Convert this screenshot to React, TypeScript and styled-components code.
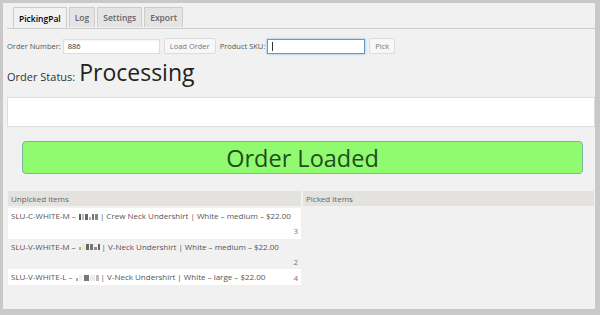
import React from 'react';
import styled, { createGlobalStyle } from 'styled-components';

const GlobalStyle = createGlobalStyle`
  html, body {
    margin: 0;
    padding: 0;
    background: #c9c9c9;
    font-family: "Open Sans", "Liberation Sans", sans-serif;
  }
`;

const Frame = styled.div`
  margin: 3px 5px 6px 3px;
  height: 306px;
  background: #f1f1f1;
  box-sizing: border-box;
  padding: 4px 0 0 4px;
  overflow: hidden;
`;

const TabBar = styled.div`
  display: flex;
  gap: 2px;
  padding-left: 6px;
  border-bottom: 1px solid #cccccc;
  height: 21px;
`;

const Tab = styled.div<{ $active?: boolean }>`
  display: flex;
  align-items: center;
  padding: 0 5px;
  font-size: 8.5px;
  font-weight: 600;
  color: ${p => (p.$active ? '#000' : '#666')};
  background: ${p => (p.$active ? '#f1f1f1' : '#e4e4e4')};
  border: 1px solid #cccccc;
  border-bottom: none;
  margin-bottom: ${p => (p.$active ? '-1px' : '0')};
  height: ${p => (p.$active ? '21px' : '20px')};
  box-sizing: border-box;
`;

const FormRow = styled.div`
  display: flex;
  align-items: center;
  margin-top: 9px;
  height: 16px;
`;

const Label = styled.span`
  font-size: 7.5px;
  color: #555;
  margin-right: 2px;
`;

const TextInput = styled.div<{ $focus?: boolean; $width: number }>`
  width: ${p => p.$width}px;
  height: 15px;
  box-sizing: border-box;
  background: #fff;
  border: 1px solid ${p => (p.$focus ? '#5b9dd9' : '#dddddd')};
  box-shadow: ${p => (p.$focus ? '0 0 2px rgba(30,140,190,.6)' : 'inset 0 1px 2px rgba(0,0,0,.05)')};
  font-size: 7.5px;
  color: #333;
  display: flex;
  align-items: center;
  padding-left: 4px;
`;

const Caret = styled.span`
  width: 1px;
  height: 9px;
  background: #333;
`;

const Button = styled.div`
  height: 16px;
  box-sizing: border-box;
  padding: 0 5px;
  margin: 0 4px;
  border: 1px solid #dcdcdc;
  background: #f7f7f7;
  border-radius: 2px;
  font-size: 7.5px;
  color: #777;
  display: flex;
  align-items: center;
`;

const StatusRow = styled.div`
  display: flex;
  align-items: baseline;
  margin-top: 2px;
  height: 32px;
`;

const StatusLabel = styled.span`
  font-size: 11px;
  color: #333;
  margin-right: 4px;
`;

const StatusValue = styled.span`
  font-size: 23px;
  color: #222;
`;

const MessageBox = styled.div`
  margin-top: 9px;
  height: 30px;
  background: #fff;
  border: 1px solid #dddddd;
  box-sizing: border-box;
`;

const Banner = styled.div`
  margin: 14px 12px 0 15px;
  height: 33px;
  box-sizing: border-box;
  background: #90fb6f;
  border: 1px solid #7fb3a0;
  border-radius: 4px;
  display: flex;
  align-items: center;
  justify-content: center;
  font-size: 23.5px;
  color: #244c1f;
`;

const Table = styled.div`
  display: grid;
  grid-template-columns: 293px 291px;
  column-gap: 2px;
  margin-top: 17px;
  margin-left: 1px;
`;

const HeadCell = styled.div`
  background: #e4e2df;
  height: 15px;
  font-size: 8px;
  color: #666;
  display: flex;
  align-items: center;
  padding-left: 3px;
`;

const Column = styled.div`
  display: flex;
  flex-direction: column;
  padding-top: 2px;
`;

const ItemRow = styled.div<{ $odd?: boolean; $stack?: boolean }>`
  background: ${p => (p.$odd ? '#ffffff' : 'transparent')};
  display: flex;
  flex-direction: ${p => (p.$stack ? 'column' : 'row')};
  justify-content: space-between;
  padding: 1px 3px 0 3px;
  font-size: 8px;
  line-height: 14.5px;
  color: #555;
  white-space: nowrap;
`;

const Qty = styled.span`
  align-self: flex-end;
  color: #777;
`;

const Redact = styled.span`
  display: inline-block;
  vertical-align: middle;
  margin: 0 1px;
  opacity: 0.8;
`;

const Block = styled.span<{ $w: number; $c: string; $h?: number }>`
  display: inline-block;
  width: ${p => p.$w}px;
  height: ${p => p.$h ?? 6}px;
  background: ${p => p.$c};
  margin-right: 1px;
`;

type Item = { sku: string; blocks: [number, string, number?][]; desc: string; qty: number; stack: boolean };

const items: Item[] = [
  {
    sku: 'SLU-C-WHITE-M –',
    blocks: [[2, '#333'], [2, '#aaa'], [3, '#444'], [2, '#999', 3], [2, '#555'], [3, '#666']],
    desc: '| Crew Neck Undershirt | White – medium – $22.00',
    qty: 3,
    stack: true,
  },
  {
    sku: 'SLU-V-WHITE-M –',
    blocks: [[2, '#999', 3], [3, '#f3e6c8'], [3, '#444'], [3, '#555'], [3, '#777', 3], [2, '#444']],
    desc: '| V-Neck Undershirt | White – medium – $22.00',
    qty: 2,
    stack: true,
  },
  {
    sku: 'SLU-V-WHITE-L –',
    blocks: [[2, '#999', 3], [4, '#f0f0f0'], [5, '#555'], [5, '#e8e8e8'], [3, '#aaa']],
    desc: '| V-Neck Undershirt | White – large – $22.00',
    qty: 4,
    stack: false,
  },
];

export default function App() {
  return (
    <>
      <GlobalStyle />
      <Frame>
        <TabBar>
          <Tab $active>PickingPal</Tab>
          <Tab>Log</Tab>
          <Tab>Settings</Tab>
          <Tab>Export</Tab>
        </TabBar>
        <FormRow>
          <Label>Order Number:</Label>
          <TextInput $width={97}>886</TextInput>
          <Button>Load Order</Button>
          <Label>Product SKU:</Label>
          <TextInput $width={98} $focus>
            <Caret />
          </TextInput>
          <Button>Pick</Button>
        </FormRow>
        <StatusRow>
          <StatusLabel>Order Status:</StatusLabel>
          <StatusValue>Processing</StatusValue>
        </StatusRow>
        <MessageBox />
        <Banner>Order Loaded</Banner>
        <Table>
          <HeadCell>Unpicked items</HeadCell>
          <HeadCell>Picked items</HeadCell>
          <Column>
            {items.map((it, i) => (
              <ItemRow key={it.sku} $odd={i % 2 === 0} $stack={it.stack}>
                <span>
                  {it.sku}{' '}
                  <Redact>
                    {it.blocks.map((b, j) => (
                      <Block key={j} $w={b[0]} $c={b[1]} $h={b[2]} />
                    ))}
                  </Redact>
                  {it.desc}
                </span>
                <Qty>{it.qty}</Qty>
              </ItemRow>
            ))}
          </Column>
          <Column />
        </Table>
      </Frame>
    </>
  );
}
